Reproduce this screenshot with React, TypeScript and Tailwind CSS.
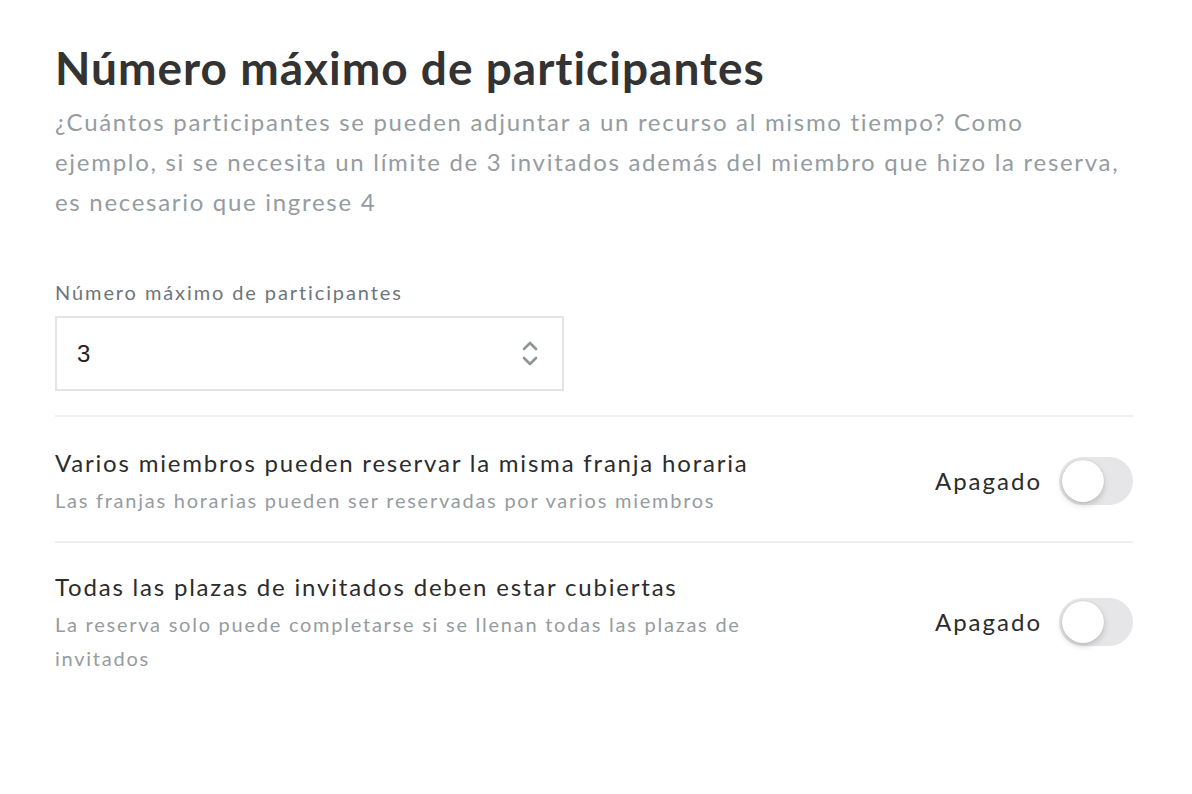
import { useState } from "react";

const font = { fontFamily: "Lato, 'Noto Sans', sans-serif" };

function Toggle({ on, onChange }: { on: boolean; onChange: () => void }) {
  return (
    <button
      onClick={onChange}
      className={`relative w-[74px] h-[48px] rounded-full transition-colors ${on ? "bg-[#34c759]" : "bg-[#e6e6e8]"}`}
    >
      <span
        className={`absolute top-[3px] w-[42px] h-[42px] rounded-full bg-white shadow-[0_3px_6px_rgba(0,0,0,0.18),0_0_1px_rgba(0,0,0,0.2)] transition-all ${on ? "left-[29px]" : "left-[3px]"}`}
      />
    </button>
  );
}

function SettingRow({
  title,
  subtitle,
  on,
  onChange,
}: {
  title: string;
  subtitle: string;
  on: boolean;
  onChange: () => void;
}) {
  return (
    <div className="flex items-center justify-between">
      <div className="w-[710px]">
        <div className="text-[24px] leading-[36px] tracking-[1.8px] text-[#2c2c2c]">{title}</div>
        <div className="mt-[2px] text-[20px] leading-[34px] tracking-[1.75px] text-[#959ca1]">{subtitle}</div>
      </div>
      <div className="flex items-center gap-[17px]">
        <span className="text-[24px] tracking-[2px] text-[#2c2c2c]">{on ? "Encendido" : "Apagado"}</span>
        <Toggle on={on} onChange={onChange} />
      </div>
    </div>
  );
}

export default function App() {
  const [value, setValue] = useState(3);
  const [multi, setMulti] = useState(false);
  const [allSlots, setAllSlots] = useState(false);

  return (
    <div style={font} className="min-h-[794px] bg-white pl-[55px] pr-[59px] pt-[38px]">
      {/* Header */}
      <h1 className="text-[46px] leading-[60px] font-bold tracking-[1px] text-[#333333]">
        Número máximo de participantes
      </h1>
      <p className="mt-[4px] text-[24px] leading-[40px] tracking-[1.7px] text-[#959ca1]">
        ¿Cuántos participantes se pueden adjuntar a un recurso al mismo tiempo? Como ejemplo, si se
        necesita un límite de 3 invitados además del miembro que hizo la reserva, es necesario que
        ingrese 4
      </p>

      {/* Input */}
      <div className="mt-[56px]">
        <label className="block text-[20px] leading-[28px] tracking-[1.9px] text-[#6d757b]">
          Número máximo de participantes
        </label>
        <div className="mt-[10px] w-[509px] h-[75px] border-2 border-[#e4e4e6] flex items-center justify-between pl-[20px] pr-[24px]">
          <span
            className="text-[24px] text-[#222]"
            style={{ fontFamily: "'Liberation Sans', Arial, sans-serif" }}
          >
            {value}
          </span>
          <div className="flex flex-col items-center gap-[5px]">
            <button onClick={() => setValue(value + 1)}>
              <svg width="16" height="10" viewBox="0 0 16 10" fill="none">
                <path d="M2 8l6-6 6 6" stroke="#8c959b" strokeWidth="2.6" strokeLinecap="round" strokeLinejoin="round" />
              </svg>
            </button>
            <button onClick={() => setValue(Math.max(1, value - 1))}>
              <svg width="16" height="10" viewBox="0 0 16 10" fill="none">
                <path d="M2 2l6 6 6-6" stroke="#8c959b" strokeWidth="2.6" strokeLinecap="round" strokeLinejoin="round" />
              </svg>
            </button>
          </div>
        </div>
      </div>

      <div className="mt-[24px] border-t-2 border-[#f0f0f2]" />

      <div className="pt-[28px] pb-[24px]">
        <SettingRow
          title="Varios miembros pueden reservar la misma franja horaria"
          subtitle="Las franjas horarias pueden ser reservadas por varios miembros"
          on={multi}
          onChange={() => setMulti(!multi)}
        />
      </div>

      <div className="border-t-2 border-[#f0f0f2]" />

      <div className="pt-[26px]">
        <SettingRow
          title="Todas las plazas de invitados deben estar cubiertas"
          subtitle="La reserva solo puede completarse si se llenan todas las plazas de invitados"
          on={allSlots}
          onChange={() => setAllSlots(!allSlots)}
        />
      </div>
    </div>
  );
}
